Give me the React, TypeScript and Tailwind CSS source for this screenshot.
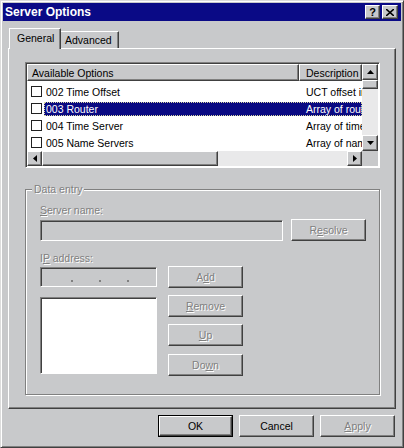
import React from 'react';

const raised =
  'border border-t-white border-l-white border-r-[#404040] border-b-[#404040] shadow-[inset_-1px_-1px_0_#808080]';
const sunken =
  'border border-t-[#808080] border-l-[#808080] border-r-white border-b-white shadow-[inset_1px_1px_0_#404040]';
const dis = 'text-[#808080] [text-shadow:1px_1px_0_#ffffff]';

const Arrow = ({ dir }: { dir: 'up' | 'down' | 'left' | 'right' }) => {
  const pts = {
    up: '0,4 7,4 3.5,0',
    down: '0,0 7,0 3.5,4',
    left: '4,0 4,7 0,3.5',
    right: '0,0 0,7 4,3.5',
  }[dir];
  const vertical = dir === 'up' || dir === 'down';
  return (
    <svg width={vertical ? 7 : 4} height={vertical ? 4 : 7} viewBox={vertical ? '0 0 7 4' : '0 0 4 7'}>
      <polygon points={pts} fill="#000" />
    </svg>
  );
};

const Btn = ({
  children,
  disabled,
  def,
  className = '',
}: {
  children: React.ReactNode;
  disabled?: boolean;
  def?: boolean;
  className?: string;
}) => (
  <div className={`${def ? 'border border-black' : ''} w-[75px] h-[22px] flex shrink-0 ${className}`}>
    <div className={`${raised} flex-1 flex items-center justify-center ${disabled ? dis : 'text-black'}`}>
      {children}
    </div>
  </div>
);

const rows = [
  { name: '002 Time Offset', desc: 'UCT offset in seconds' },
  { name: '003 Router', desc: 'Array of router addresses', sel: true },
  { name: '004 Time Server', desc: 'Array of time server addresses' },
  { name: '005 Name Servers', desc: 'Array of name servers' },
];

export default function App() {
  return (
    <div className="w-[404px] h-[448px] bg-[#c8c9cb] border border-t-[#dcdcdc] border-l-[#dcdcdc] border-r-[#404040] border-b-[#404040] shadow-[inset_1px_1px_0_#ffffff,inset_-1px_-1px_0_#808080] p-[2px] flex flex-col font-['Liberation_Sans',Arial,sans-serif] text-[10.5px] leading-[12px] text-black select-none">
      {/* title bar */}
      <div className="h-[18px] bg-[#0a0a86] flex items-center justify-between pl-[2px] pr-[3px] shrink-0">
        <span className="text-white font-bold text-[12px]">Server Options</span>
        <div className="flex gap-[2px]">
          <div className={`${raised} w-[15px] h-[14px] flex items-center justify-center bg-[#c8c9cb] font-bold text-[11px] leading-none`}>
            ?
          </div>
          <div className={`${raised} w-[16px] h-[14px] flex items-center justify-center bg-[#c8c9cb]`}>
            <svg width="8" height="7" viewBox="0 0 8 7">
              <path d="M0 0 L8 7 M8 0 L0 7" stroke="#000" strokeWidth="1.6" />
            </svg>
          </div>
        </div>
      </div>

      {/* tabs */}
      <div className="flex items-end h-[20px] mt-[7px] ml-[5px] relative z-10">
        <div className="ml-[1px] w-[52px] h-[21px] -mb-[1px] bg-[#c8c9cb] border-t border-l border-t-white border-l-white border-r border-r-[#404040] shadow-[inset_-1px_0_0_#808080] flex items-start pt-[3px] pl-[7px]">
          General
        </div>
        <div className="w-[58px] h-[17px] border-t border-t-white border-r border-r-[#404040] shadow-[inset_-1px_0_0_#808080] flex items-center pl-[4px]">
          Advanced
        </div>
      </div>

      {/* panel */}
      <div className={`ml-[5px] w-[388px] h-[361px] ${raised} pt-[13px] pl-[16px] flex flex-col`}>
        {/* list view */}
        <div className={`${sunken} w-[355px] h-[106px] p-[1px] flex flex-col bg-white`}>
          <div className="flex h-[87px]">
            <div className="w-[335px] flex flex-col overflow-hidden">
              <div className="flex h-[17px] bg-[#c8c9cb]">
                <div className={`${raised} w-[272px] flex items-center pl-[4px]`}>Available Options</div>
                <div className={`${raised} flex-1 flex items-center pl-[6px] whitespace-nowrap overflow-hidden`}>Description</div>
              </div>
              <div className="pt-[2px] flex flex-col">
                {rows.map((r) => (
                  <div key={r.name} className="h-[17px] flex items-center">
                    <div className="w-[17px] pl-[4px] flex items-center">
                      <div className="w-[11px] h-[11px] border border-[#202020] bg-white" />
                    </div>
                    <div
                      className={`h-[14px] flex-1 flex items-center whitespace-nowrap overflow-hidden ${
                        r.sel ? 'bg-[#0a0a82] text-white outline outline-1 outline-dotted outline-[#d8d8a0] -outline-offset-1' : ''
                      }`}
                    >
                      <div className="w-[255px] pl-[2px] shrink-0">{r.name}</div>
                      <div className="pl-[7px] shrink-0">{r.desc}</div>
                    </div>
                  </div>
                ))}
              </div>
            </div>
            {/* vertical scrollbar */}
            <div className="w-[16px] flex flex-col bg-[#e9e9ea]">
              <div className={`${raised} h-[16px] bg-[#c8c9cb] flex items-center justify-center`}>
                <Arrow dir="up" />
              </div>
              <div className={`${raised} h-[9px] bg-[#c8c9cb]`} />
              <div className="flex-1" />
              <div className={`${raised} h-[16px] bg-[#c8c9cb] flex items-center justify-center`}>
                <Arrow dir="down" />
              </div>
            </div>
          </div>
          {/* horizontal scrollbar */}
          <div className="flex h-[15px]">
            <div className="w-[335px] flex bg-[#e9e9ea]">
              <div className={`${raised} w-[15px] bg-[#c8c9cb] flex items-center justify-center`}>
                <Arrow dir="left" />
              </div>
              <div className={`${raised} w-[176px] bg-[#c8c9cb]`} />
              <div className="flex-1" />
              <div className={`${raised} w-[15px] bg-[#c8c9cb] flex items-center justify-center`}>
                <Arrow dir="right" />
              </div>
            </div>
            <div className="w-[16px] bg-[#c8c9cb]" />
          </div>
        </div>

        {/* data entry group */}
        <div className="relative mt-[21px] w-[355px] h-[206px] border border-[#808080] shadow-[1px_1px_0_#ffffff,inset_1px_1px_0_#ffffff] pt-[14px] pl-[14px] flex flex-col">
          <span className={`absolute -top-[7px] left-[6px] px-[2px] bg-[#c8c9cb] ${dis}`}>Data entry</span>
          <div className={`h-[12px] ${dis}`}>
            <span className="underline">S</span>erver name:
          </div>
          <div className="flex items-end mt-[3px]">
            <div className={`${sunken} w-[243px] h-[21px] bg-[#c8c9cb]`} />
            <Btn disabled className="ml-[8px]">
              R<span className="underline">e</span>solve
            </Btn>
          </div>
          <div className={`h-[12px] mt-[11px] ${dis}`}>
            I<span className="underline">P</span> address:
          </div>
          <div className="flex mt-[2px]">
            <div className="flex flex-col pt-[1px]">
              <div className={`${sunken} w-[117px] h-[20px] bg-[#c8c9cb] flex items-end justify-center gap-[26px] pb-[4px] pl-[3px]`}>
                <span className="w-[2px] h-[2px] bg-[#808080]" />
                <span className="w-[2px] h-[2px] bg-[#808080]" />
                <span className="w-[2px] h-[2px] bg-[#808080]" />
              </div>
              <div className={`${sunken} w-[117px] h-[77px] bg-white mt-[10px]`} />
            </div>
            <div className="flex flex-col ml-[11px] gap-[7px]">
              <Btn disabled className="w-[74px]">
                A<span className="underline">d</span>d
              </Btn>
              <Btn disabled className="w-[74px]">
                <span className="underline">R</span>emove
              </Btn>
              <Btn disabled className="w-[74px]">
                <span className="underline">U</span>p
              </Btn>
              <Btn disabled className="w-[74px] mt-[1px]">
                Do<span className="underline">w</span>n
              </Btn>
            </div>
          </div>
        </div>
      </div>

      {/* bottom buttons */}
      <div className="flex justify-end gap-[6px] mt-[6px] pr-[6px]">
        <Btn def>OK</Btn>
        <Btn>Cancel</Btn>
        <Btn disabled>
          <span className="underline">A</span>pply
        </Btn>
      </div>
    </div>
  );
}
